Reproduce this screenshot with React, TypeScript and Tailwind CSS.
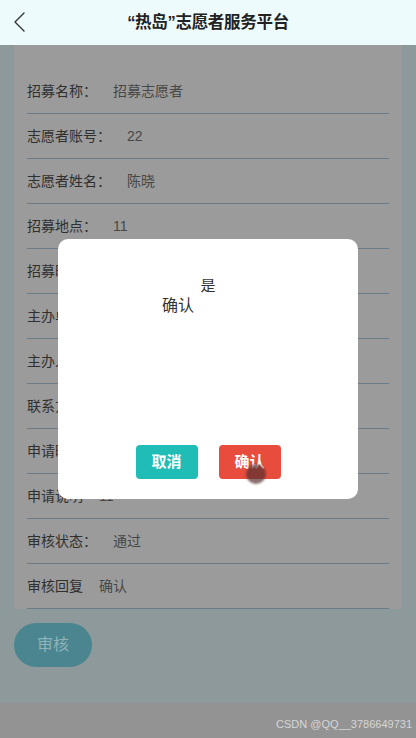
import React from 'react';

const rows: { label: string; value: string }[] = [
    { label: '招募名称：', value: '招募志愿者' },
    { label: '志愿者账号：', value: '22' },
    { label: '志愿者姓名：', value: '陈晓' },
    { label: '招募地点：', value: '11' },
    { label: '招募时间：', value: '11' },
    { label: '主办单位：', value: '11' },
    { label: '主办人：', value: '11' },
    { label: '联系方式：', value: '11' },
    { label: '申请时间：', value: '11' },
    { label: '申请说明', value: '11' },
    { label: '审核状态：', value: '通过' },
    { label: '审核回复', value: '确认' },
];

const font = { fontFamily: '"Liberation Sans", "Noto Sans CJK SC", sans-serif' };

export default function App() {
    return (
        <div className="relative w-[416px] h-[738px] overflow-hidden bg-[#8d999a] flex flex-col" style={font}>
            {/* Header */}
            <div className="relative z-20 h-[45px] shrink-0 bg-[#eefbfd] flex items-center justify-center">
                <svg className="absolute left-[13px] top-[12px]" width="13" height="20" viewBox="0 0 13 20" fill="none">
                    <polyline points="11,1 2,10 11,19" stroke="#333" strokeWidth="1.4" strokeLinecap="round" strokeLinejoin="round" />
                </svg>
                <h1 className="text-[16.5px] font-bold text-[#222] tracking-[-0.3px]">“热岛”志愿者服务平台</h1>
            </div>

            {/* Detail card */}
            <div className="flex-1 flex flex-col">
                <div className="mx-[14px] bg-[#9b9b9b] px-[13px] pt-[24px]">
                    {rows.map((r, i) => (
                        <div key={i} className="h-[45px] flex items-center border-b border-[#6b7b87] text-[14px]">
                            <span className="text-[#2f2f2f]">{r.label}</span>
                            <span className="ml-4 text-[#474747]">{r.value}</span>
                        </div>
                    ))}
                </div>
                <button className="ml-[14px] mt-[14px] w-[78px] h-[44px] rounded-full bg-[#4a8590] text-[#8fb3b8] text-[16px]">
                    审核
                </button>
            </div>

            {/* Bottom bar */}
            <div className="h-[35px] shrink-0 bg-[#939393] flex items-end justify-end pr-[4px] pb-[6px]">
                <span className="text-[11px] text-[#d6d6d6]" style={{ fontFamily: '"Liberation Sans", sans-serif' }}>CSDN @QQ__3786649731</span>
            </div>

            {/* Modal */}
            <div className="absolute inset-0 z-10 flex items-center justify-center">
                <div className="relative w-[300px] h-[260px] bg-white rounded-[10px] flex flex-col pt-[37px] pb-[20px]">
                    <div className="text-center text-[15px] leading-[20px] text-[#333]">是</div>
                    <div className="pl-[104px] text-[16px] leading-[20px] text-[#333]">确认</div>
                    <div className="flex-1" />
                    <div className="flex justify-center gap-[21px]">
                        <button className="w-[62px] h-[34px] rounded-[4px] bg-[#20bdb6] text-white font-bold text-[15px]">取消</button>
                        <button className="relative w-[62px] h-[34px] rounded-[4px] bg-[#e74c3c] text-white font-bold text-[15px]">
                            确认
                            <span className="absolute left-[27px] top-[19px] w-[20px] h-[20px] rounded-full bg-[#5a3030]/70 blur-[1px]" />
                        </button>
                    </div>
                </div>
            </div>
        </div>
    );
}
